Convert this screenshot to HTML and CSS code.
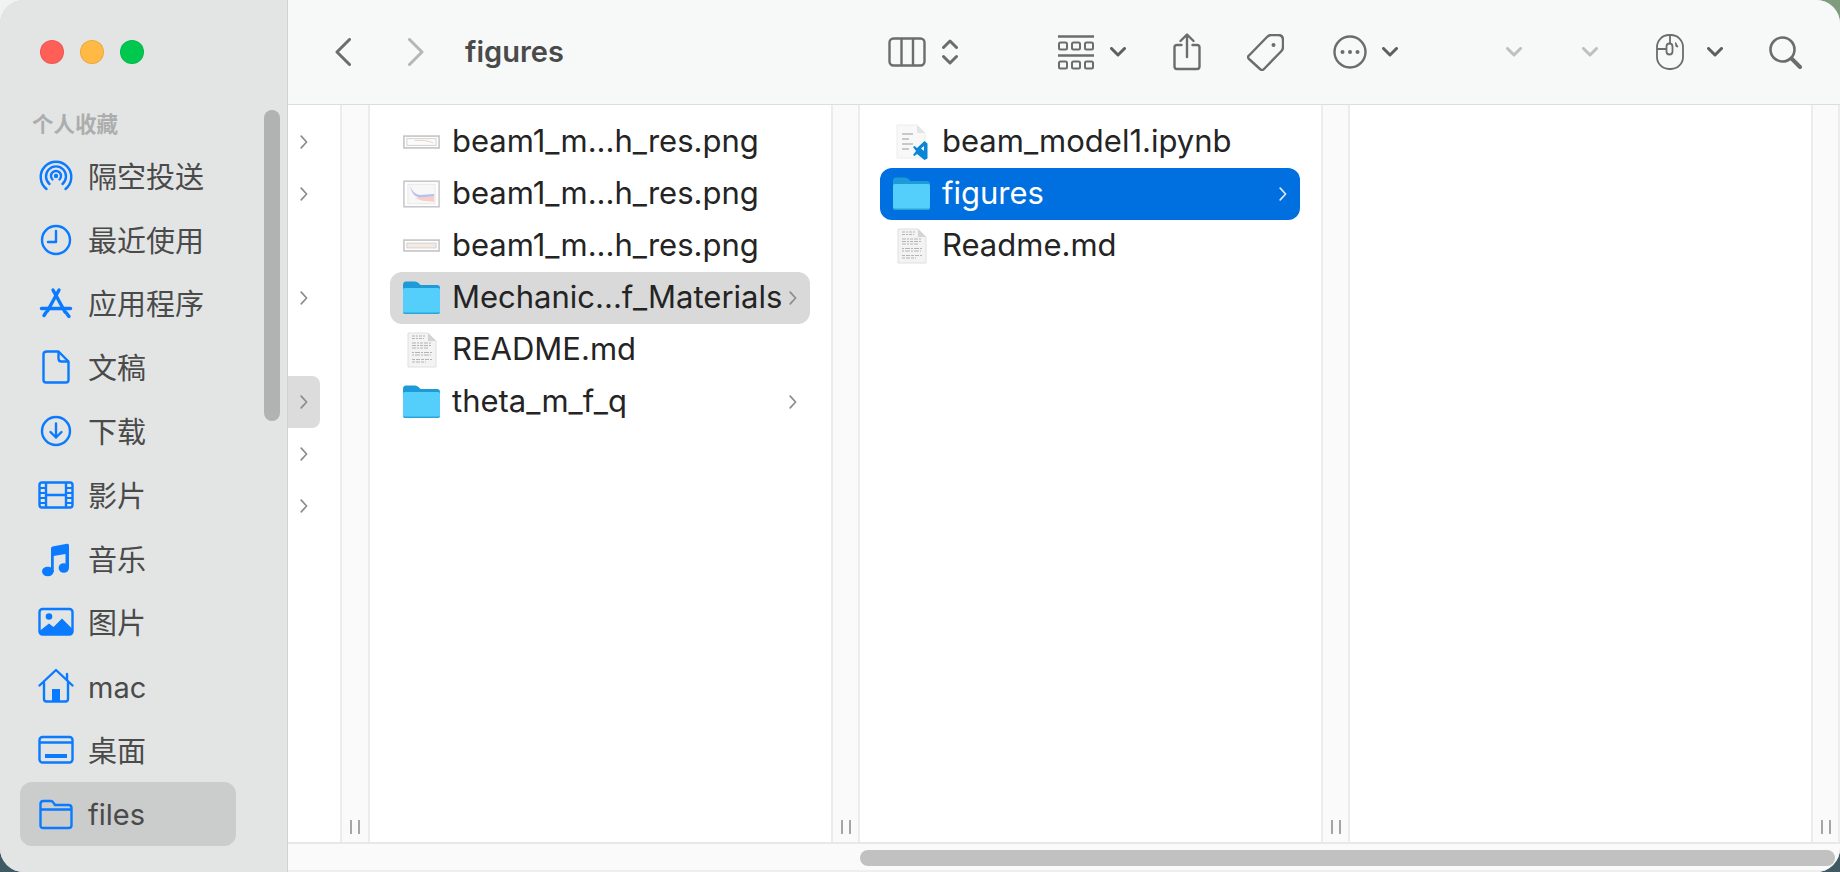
FILE: index.html
```html
<!DOCTYPE html>
<html lang="en">
<head>
    <meta charset="UTF-8">
    <meta name="viewport" content="width=device-width, initial-scale=1.0">
    <title>figures</title>
    <link rel="stylesheet" href="styles.css">
</head>
<body>
    <svg class="defs" width="0" height="0">
        <symbol id="chev-down" viewBox="0 0 16 10">
            <path d="M1.5 1.5 8 8l6.5-6.5" fill="none" stroke="currentColor" stroke-width="3" stroke-linecap="round" stroke-linejoin="round"/>
        </symbol>
        <symbol id="chev-right" viewBox="0 0 8 14">
            <path d="M1.2 1.2 6.6 7l-5.4 5.8" fill="none" stroke="currentColor" stroke-width="1.7" stroke-linecap="round" stroke-linejoin="round"/>
        </symbol>
        <symbol id="folder" viewBox="0 0 37 33">
            <path d="M0 4q0-3.500 3-3.500h9q2 0 3.500 1.500l2 2H34q3 0 3 3V12H0z" fill="#1d9bd8"/>
            <path d="M0 8.500q0-1.500 1.500-1.500h34q1.500 0 1.500 1.500V30q0 3-3 3H3q-3 0-3-3z" fill="#54cefb"/>
            <path d="M0 30.500V30q0 1.500 3 1.500h31q3 0 3-1.500v.5q0 3-3 3H3q-3 0-3-3z" fill="#2aa5dc"/>
        </symbol>
        <symbol id="doc" viewBox="0 0 30 36">
            <path d="M1 1h20l8 8v26H1z" fill="#f3f3f3" stroke="#e0e0e0"/>
            <path d="M21 1v8h8z" fill="#d4d4d4"/>
            <g fill="none" stroke="#b4b4b4" stroke-width="1.200">
                <path d="M5 4h13M5 6.500h12" stroke-dasharray="3 1 2 1"/>
                <path d="M5 11h20M5 13.500h20M5 16h17" stroke-dasharray="4 1 2 1 3 1"/>
                <path d="M5 20.500h20M5 23h19" stroke-dasharray="2 1 5 1"/>
                <path d="M5 27.500h20M5 30h14" stroke-dasharray="3 1 4 1"/>
            </g>
        </symbol>
    </svg>

    <div class="window">
        <aside class="sidebar">
            <div class="lights">
                <span class="light red"></span>
                <span class="light yellow"></span>
                <span class="light green"></span>
            </div>
            <div class="side-title">个人收藏</div>
            <ul class="side-list">
                <li class="side-item">
                    <svg class="side-icon" viewBox="0 0 36 36" fill="none" stroke="currentColor" stroke-width="2.400" stroke-linecap="round">
                        <path d="M8.500 31A15.300 15.300 0 1 1 27.500 31"/>
                        <path d="M11.500 26A10 10 0 1 1 24.500 26"/>
                        <path d="M14.500 21.500A5 5 0 1 1 21.500 21.500"/>
                        <circle cx="18" cy="18" r="2.200" fill="currentColor" stroke="none"/>
                    </svg>
                    <span>隔空投送</span>
                </li>
                <li class="side-item">
                    <svg class="side-icon" viewBox="0 0 36 36" fill="none" stroke="currentColor" stroke-width="2.400" stroke-linecap="round" stroke-linejoin="round">
                        <circle cx="18" cy="18" r="14"/>
                        <path d="M18 9v11h-8"/>
                    </svg>
                    <span>最近使用</span>
                </li>
                <li class="side-item">
                    <svg class="side-icon" viewBox="0 0 36 36" fill="none" stroke="currentColor" stroke-width="3.400" stroke-linecap="round">
                        <path d="M15 5l12 22"/>
                        <path d="M21 5 9.500 26"/>
                        <path d="M3.500 23.500h29"/>
                        <path d="M28 27.500l3 4M8 27.500l-2 3"/>
                    </svg>
                    <span>应用程序</span>
                </li>
                <li class="side-item">
                    <svg class="side-icon" viewBox="0 0 36 36" fill="none" stroke="currentColor" stroke-width="2.400" stroke-linejoin="round">
                        <path d="M9 2.500h11.500L30.500 12.500V31q0 2.500-2.500 2.500H8Q5.500 33.500 5.500 31V5.500Q5.500 2.500 9 2.500z"/>
                        <path d="M20.500 2.500v7q0 3 3 3h7"/>
                    </svg>
                    <span>文稿</span>
                </li>
                <li class="side-item">
                    <svg class="side-icon" viewBox="0 0 36 36" fill="none" stroke="currentColor" stroke-width="2.400" stroke-linecap="round" stroke-linejoin="round">
                        <circle cx="18" cy="18" r="14"/>
                        <path d="M18 10.500v14M12.500 19l5.500 5.500 5.500-5.500"/>
                    </svg>
                    <span>下载</span>
                </li>
                <li class="side-item">
                    <svg class="side-icon" viewBox="0 0 36 36" fill="none">
                        <rect x="1.500" y="5.500" width="33" height="25" rx="2.500" stroke="currentColor" stroke-width="2.400"/>
                        <path d="M8 5v26M28 5v26M8 18h20" stroke="currentColor" stroke-width="2.400"/>
                        <path d="M1.500 11h6.500M1.500 16h6.500M1.500 21h6.500M1.500 26h6.500M28 11h6.500M28 16h6.500M28 21h6.500M28 26h6.500" stroke="currentColor" stroke-width="2.200"/>
                    </svg>
                    <span>影片</span>
                </li>
                <li class="side-item">
                    <svg class="side-icon" viewBox="0 0 36 36">
                        <path d="M13 9.500 30 6.500V27h-2.500V13L15.500 15V31H13z" fill="currentColor"/>
                        <path d="M13 7.500q0-1.500 1.500-2L29 2.800q2-.3 2 1.700V27h-3V9L15.500 11.500V31H13z" fill="currentColor"/>
                        <ellipse cx="9.800" cy="30.500" rx="5.800" ry="4.800" fill="currentColor"/>
                        <ellipse cx="25.800" cy="27" rx="5.200" ry="4.800" fill="currentColor"/>
                    </svg>
                    <span>音乐</span>
                </li>
                <li class="side-item">
                    <svg class="side-icon" viewBox="0 0 36 36">
                        <rect x="1.500" y="5" width="33" height="25.500" rx="3" fill="none" stroke="currentColor" stroke-width="2.400"/>
                        <circle cx="11" cy="12.500" r="3.300" fill="currentColor"/>
                        <path d="M1.500 27 11 19.500l4.500 3.500L24 14.500 34.500 25v3q0 3-3 3h-27q-3 0-3-3z" fill="currentColor"/>
                    </svg>
                    <span>图片</span>
                </li>
                <li class="side-item">
                    <svg class="side-icon" viewBox="0 0 36 36" fill="none" stroke="currentColor" stroke-width="2.400" stroke-linecap="round" stroke-linejoin="round">
                        <path d="M1.500 17.500 18 2l16.500 15.500"/>
                        <path d="M29 6v6"/>
                        <path d="M6 15v16q0 2.500 2.500 2.500h19q2.500 0 2.500-2.500V15"/>
                        <rect x="14" y="21" width="8" height="12.500" fill="currentColor" stroke="none"/>
                    </svg>
                    <span class="latin">mac</span>
                </li>
                <li class="side-item">
                    <svg class="side-icon" viewBox="0 0 36 36" fill="none" stroke="currentColor" stroke-width="2.400">
                        <rect x="1.500" y="5" width="33" height="25.500" rx="3"/>
                        <path d="M1.500 10.500h33"/>
                        <rect x="7" y="22" width="22" height="4" fill="currentColor" stroke="none"/>
                    </svg>
                    <span>桌面</span>
                </li>
                <li class="side-item active">
                    <svg class="side-icon" viewBox="0 0 36 36" fill="none" stroke="currentColor" stroke-width="2.400" stroke-linejoin="round">
                        <path d="M2.500 8q0-3 3-3h7.500q1.500 0 3 2.500l1 1.500h13.500q3 0 3 3v17.500q0 2.500-3 2.500h-25q-3 0-3-2.500z"/>
                        <path d="M2.500 13.500h31"/>
                    </svg>
                    <span class="latin">files</span>
                </li>
            </ul>
            <div class="side-scroll"></div>
        </aside>

        <main class="content">
            <header class="toolbar">
                <svg class="tb back" width="16" height="28" viewBox="0 0 16 28" fill="none" stroke="#6c6c6c" stroke-width="3" stroke-linecap="round" stroke-linejoin="round"><path d="M14.500 1.500 2 14l12.500 12.500"/></svg>
                <svg class="tb forward" width="16" height="28" viewBox="0 0 16 28" fill="none" stroke="#b6b6b6" stroke-width="3" stroke-linecap="round" stroke-linejoin="round"><path d="M1.500 1.500 14 14 1.500 26.500"/></svg>
                <h1 class="title">figures</h1>

                <svg class="tb view" width="38" height="30" viewBox="0 0 38 30" fill="none" stroke="#6c6c6c" stroke-width="2.400"><rect x="1.500" y="1.500" width="35" height="27" rx="4"/><path d="M13.500 1.500v27M25 1.500v27"/></svg>
                <svg class="tb updown" width="16" height="26" viewBox="0 0 16 26" fill="none" stroke="#6c6c6c" stroke-width="3" stroke-linecap="round" stroke-linejoin="round"><path d="M1.500 8.500 8 2l6.500 6.500M1.500 17.500 8 24l6.500-6.500"/></svg>

                <svg class="tb group" width="36" height="35" viewBox="0 0 36 35" fill="none" stroke="#6c6c6c"><path d="M0 1.500h36M0 20.500h36" stroke-width="2.600"/><g stroke-width="2"><rect x="1" y="7.500" width="8" height="7" rx="1.500"/><rect x="14" y="7.500" width="8" height="7" rx="1.500"/><rect x="27" y="7.500" width="8" height="7" rx="1.500"/><rect x="1" y="26.500" width="8" height="7" rx="1.500"/><rect x="14" y="26.500" width="8" height="7" rx="1.500"/><rect x="27" y="26.500" width="8" height="7" rx="1.500"/></g></svg>
                <svg class="tb small-chev group-chev" width="16" height="10"><use href="#chev-down"/></svg>

                <svg class="tb share" width="28" height="38" viewBox="0 0 28 38" fill="none" stroke="#6c6c6c" stroke-width="2.400" stroke-linecap="round" stroke-linejoin="round"><path d="M14 24V2M7.500 8 14 1.500 20.500 8"/><path d="M8.500 12H4q-2.500 0-2.500 2.500v19Q1.500 36 4 36h20q2.500 0 2.500-2.500v-19Q26.500 12 24 12h-4.500"/></svg>
                <svg class="tb tag" width="37" height="37" viewBox="0 0 37 37" fill="none" stroke="#6c6c6c" stroke-width="2.400" stroke-linejoin="round"><path d="M2 21.500 20 3q2-2 4-2h7q5 0 5 5v7q0 2.500-2 4.500L17 35q-2 2-4 0L2 25q-2-2 0-3.500z"/><circle cx="26.500" cy="11" r="2" fill="#6c6c6c" stroke="none"/></svg>
                <svg class="tb more" width="34" height="34" viewBox="0 0 34 34" fill="none" stroke="#6c6c6c" stroke-width="2.400"><circle cx="17" cy="17" r="15.500"/><g fill="#6c6c6c" stroke="none"><circle cx="9.500" cy="17" r="2"/><circle cx="17" cy="17" r="2"/><circle cx="24.500" cy="17" r="2"/></g></svg>
                <svg class="tb small-chev more-chev" width="16" height="10"><use href="#chev-down"/></svg>

                <svg class="tb small-chev off off-first" width="16" height="10"><use href="#chev-down"/></svg>
                <svg class="tb small-chev off off-second" width="16" height="10"><use href="#chev-down"/></svg>

                <svg class="tb mouse" width="28" height="36" viewBox="0 0 28 36" fill="none" stroke="#6c6c6c" stroke-width="1.800"><rect x="1" y="1" width="26" height="34" rx="12"/><path d="M14 1v8M1 15h10"/><rect x="10.500" y="9.500" width="6" height="11" rx="3"/><path d="M19.500 8.500l2.500 4.500-2-.5z" fill="#6c6c6c" stroke-width="1"/></svg>
                <svg class="tb small-chev mouse-chev" width="16" height="10"><use href="#chev-down"/></svg>

                <svg class="tb search" width="33" height="33" viewBox="0 0 33 33" fill="none" stroke="#6c6c6c" stroke-linecap="round"><circle cx="13.500" cy="13.500" r="12" stroke-width="2.600"/><path d="M22.500 22.500 31 31" stroke-width="4"/></svg>
            </header>

            <div class="columns">
                <section class="col col-rail">
                    <ul class="rows">
                        <li class="row"><svg class="chev" width="8" height="14"><use href="#chev-right"/></svg></li>
                        <li class="row"><svg class="chev" width="8" height="14"><use href="#chev-right"/></svg></li>
                        <li class="row"></li>
                        <li class="row"><svg class="chev" width="8" height="14"><use href="#chev-right"/></svg></li>
                        <li class="row"></li>
                        <li class="row open"><svg class="chev" width="8" height="14"><use href="#chev-right"/></svg></li>
                        <li class="row"><svg class="chev" width="8" height="14"><use href="#chev-right"/></svg></li>
                        <li class="row"><svg class="chev" width="8" height="14"><use href="#chev-right"/></svg></li>
                    </ul>
                </section>
                <div class="grip grip-first"><span></span><span></span></div>

                <section class="col">
                    <ul class="rows">
                        <li class="row file">
                            <svg class="file-icon" viewBox="0 0 38 36"><rect x="0" y="11" width="38" height="14" fill="#e6e6e6"/><rect x="1" y="12" width="36" height="12" fill="#fff" stroke="#c4c4c4" stroke-width="1.500"/><rect x="4" y="14.500" width="30" height="7" fill="#fbfbfb" stroke="#d2d2d2"/><path d="M12 16.500q12-1 19 2.500" fill="none" stroke="#eccfc4"/></svg>
                            <span class="name">beam1_m...h_res.png</span>
                        </li>
                        <li class="row file">
                            <svg class="file-icon" viewBox="0 0 38 36"><rect x="0" y="4" width="38" height="28" fill="#e6e6e6"/><rect x="1" y="5" width="36" height="26" fill="#fff" stroke="#c8c8c8" stroke-width="1.500"/><rect x="5" y="8" width="28" height="20" fill="#f7f7f7" stroke="#e8e8e8"/><path d="M7 9q3 9 10 10l15-1v3l-15 1Q9 20 7 9z" fill="#b8c0ec"/><path d="M12 22l20-2v6l-12-1z" fill="#f7cfc8"/></svg>
                            <span class="name">beam1_m...h_res.png</span>
                        </li>
                        <li class="row file">
                            <svg class="file-icon" viewBox="0 0 38 36"><rect x="0" y="11" width="38" height="13" fill="#e6e6e6"/><rect x="1" y="12" width="36" height="11" fill="#fff" stroke="#c4c4c4" stroke-width="1.500"/><rect x="4" y="15" width="30" height="5" fill="#f5e9e3" stroke="#d2d2d2"/></svg>
                            <span class="name">beam1_m...h_res.png</span>
                        </li>
                        <li class="row file selected">
                            <svg class="file-icon" viewBox="0 0 37 36"><use href="#folder" y="1" width="37" height="33"/></svg>
                            <span class="name">Mechanic...f_Materials</span>
                            <svg class="chev" width="8" height="14"><use href="#chev-right"/></svg>
                        </li>
                        <li class="row file">
                            <svg class="file-icon" viewBox="0 0 37 36"><use href="#doc" x="4" width="30" height="36"/></svg>
                            <span class="name">README.md</span>
                        </li>
                        <li class="row file">
                            <svg class="file-icon" viewBox="0 0 37 36"><use href="#folder" y="1" width="37" height="33"/></svg>
                            <span class="name">theta_m_f_q</span>
                            <svg class="chev" width="8" height="14"><use href="#chev-right"/></svg>
                        </li>
                    </ul>
                </section>
                <div class="grip"><span></span><span></span></div>

                <section class="col">
                    <ul class="rows">
                        <li class="row file">
                            <svg class="file-icon" viewBox="0 0 37 36"><path d="M4 1h20l8 8v25H4z" fill="#f8f8f8" stroke="#ececec"/><path d="M24 1v8h8z" fill="#e4e4e4"/><path d="M9 10h11M9 15h7M9 20h11M9 25h7" stroke="#b9b9b9" stroke-width="1.600"/><path d="M31.500 23 24 30l-2.500-2-1.500 1 3 4-3 4 1.500 1 2.500-2 7.500 6 3-1.500v-15z" transform="translate(0 -6)" fill="#0a86d8"/><path d="M31 28v5l-3-2.500z" transform="translate(0 -6)" fill="#f8f8f8"/></svg>
                            <span class="name">beam_model1.ipynb</span>
                        </li>
                        <li class="row file current">
                            <svg class="file-icon" viewBox="0 0 37 36"><use href="#folder" y="1" width="37" height="33"/></svg>
                            <span class="name">figures</span>
                            <svg class="chev" width="8" height="14"><use href="#chev-right"/></svg>
                        </li>
                        <li class="row file">
                            <svg class="file-icon" viewBox="0 0 37 36"><use href="#doc" x="4" width="30" height="36"/></svg>
                            <span class="name">Readme.md</span>
                        </li>
                    </ul>
                </section>
                <div class="grip"><span></span><span></span></div>

                <section class="col"></section>
                <div class="grip"><span></span><span></span></div>
            </div>

            <div class="hscroll"><div class="hscroll-thumb"></div></div>
        </main>
    </div>
</body>
</html>
```

FILE: styles.css
```css
* {
    box-sizing: border-box;
}

body, h1, ul {
    margin: 0;
    padding: 0;
}

ul {
    list-style: none;
}

body {
    width: 1840px;
    height: 872px;
    overflow: hidden;
    font-family: Inter, "Noto Sans CJK SC", sans-serif;
    background:
        radial-gradient(circle at 100% 0, #7f9d7c 0, #7f9d7c 40px, transparent 41px),
        radial-gradient(circle at 0 0, #f2f2f2 0, #f2f2f2 40px, transparent 41px),
        #3f5a62;
}

.defs {
    position: absolute;
}

.window {
    display: flex;
    height: 872px;
    border-radius: 24px;
    overflow: hidden;
    background: #fff;
    box-shadow: inset 0 0 0 1px #cfcfcf;
}

/* sidebar */
.sidebar {
    position: relative;
    flex: 0 0 288px;
    background: #e3e5e5;
    border-right: 1px solid #d1d3d3;
    padding: 40px 0 0 20px;
}

.lights {
    display: flex;
    gap: 16px;
    padding-left: 20px;
}

.light {
    width: 24px;
    height: 24px;
    border-radius: 50%;
    border: 1px solid rgba(0, 0, 0, 0.08);
}

.red { background: #ff5f57; }
.yellow { background: #ffb944; }
.green { background: #00c84f; }

.side-title {
    margin: 44px 0 4px 12px;
    height: 32px;
    line-height: 32px;
    font-size: 21.5px;
    font-weight: 700;
    color: #acadad;
}

.side-item {
    display: flex;
    align-items: center;
    gap: 14px;
    width: 216px;
    height: 63.8px;
    padding-left: 18px;
    font-size: 29px;
    color: #4a4a4a;
    border-radius: 12px;
}

.side-item span {
    padding-bottom: 2px;
}

.side-item .latin {
    padding: 2px 0 0;
}

.side-item.active {
    background: #cbcccc;
}

.side-icon {
    flex: none;
    width: 36px;
    height: 36px;
    color: #0a7aff;
}

.side-scroll {
    position: absolute;
    top: 110px;
    left: 264px;
    width: 16px;
    height: 311px;
    border-radius: 8px;
    background: #b1b2b2;
}

/* toolbar */
.content {
    flex: 1;
    display: flex;
    flex-direction: column;
    min-width: 0;
}

.toolbar {
    display: flex;
    align-items: center;
    flex: 0 0 105px;
    background: #f7f9f8;
    border-bottom: 1px solid #dcdddd;
    color: #5f5f5f;
}

.tb {
    flex: none;
}

.title {
    width: 100px;
    margin-left: 41px;
    padding-bottom: 2px;
    font-size: 29px;
    font-weight: 600;
    color: #4a4a4a;
}

.small-chev {
    color: #5f5f5f;
}

.small-chev.off {
    color: #bfbfbf;
}

.back { margin-left: 47px; }
.forward { margin-left: 57px; }
.view { margin-left: 323px; }
.updown { margin-left: 16px; }
.group { margin-left: 100px; }
.group-chev { margin-left: 16px; }
.share { margin-left: 47px; }
.tag { margin-left: 46px; }
.more { margin-left: 49px; }
.more-chev { margin-left: 15px; }
.off-first { margin-left: 108px; }
.off-second { margin-left: 60px; }
.mouse { margin-left: 58px; }
.mouse-chev { margin-left: 23px; }
.search { margin-left: 46px; }

/* columns */
.columns {
    flex: 1;
    display: flex;
    min-height: 0;
}

.col {
    flex: 0 0 461px;
    padding: 11px 21px 0 20px;
    background: #fff;
}

.col-rail {
    flex-basis: 52px;
    padding: 11px 20px 0 0;
}

.grip {
    flex: 0 0 29px;
    display: flex;
    align-items: flex-end;
    justify-content: center;
    gap: 6px;
    padding-bottom: 8px;
    background: #fafafa;
    border-left: 2px solid #ececec;
    border-right: 2px solid #ececec;
}

.grip-first {
    flex-basis: 30px;
}

.grip span {
    width: 2px;
    height: 14px;
    background: #a5a5a5;
}

.row {
    display: flex;
    align-items: center;
    height: 52px;
    border-radius: 12px;
    color: #8c8c8c;
}

.col-rail .row {
    justify-content: center;
}

.col-rail .row.open {
    background: #dcdcdc;
    border-radius: 0 8px 8px 0;
}

.file {
    padding: 0 13px;
    font-size: 31px;
    color: #8c8c8c;
}

.file-icon {
    flex: none;
    width: 37px;
    height: 36px;
    margin-right: 12px;
}

.name {
    flex: 1;
    padding-bottom: 3px;
    color: #242424;
    white-space: nowrap;
}

.file.selected {
    background: #d9d9d9;
}

.file.current {
    background: #006fdf;
    color: #dbe9fb;
}

.file.current .name {
    color: #fff;
}

/* bottom scrollbar */
.hscroll {
    flex: 0 0 30px;
    padding: 6px 5px 0 572px;
    background: #fafafa;
    border-top: 2px solid #e8e8e8;
    border-bottom: 2px solid #eeeeee;
}

.hscroll-thumb {
    height: 16px;
    border-radius: 8px;
    background: #c1c1c1;
}
```
